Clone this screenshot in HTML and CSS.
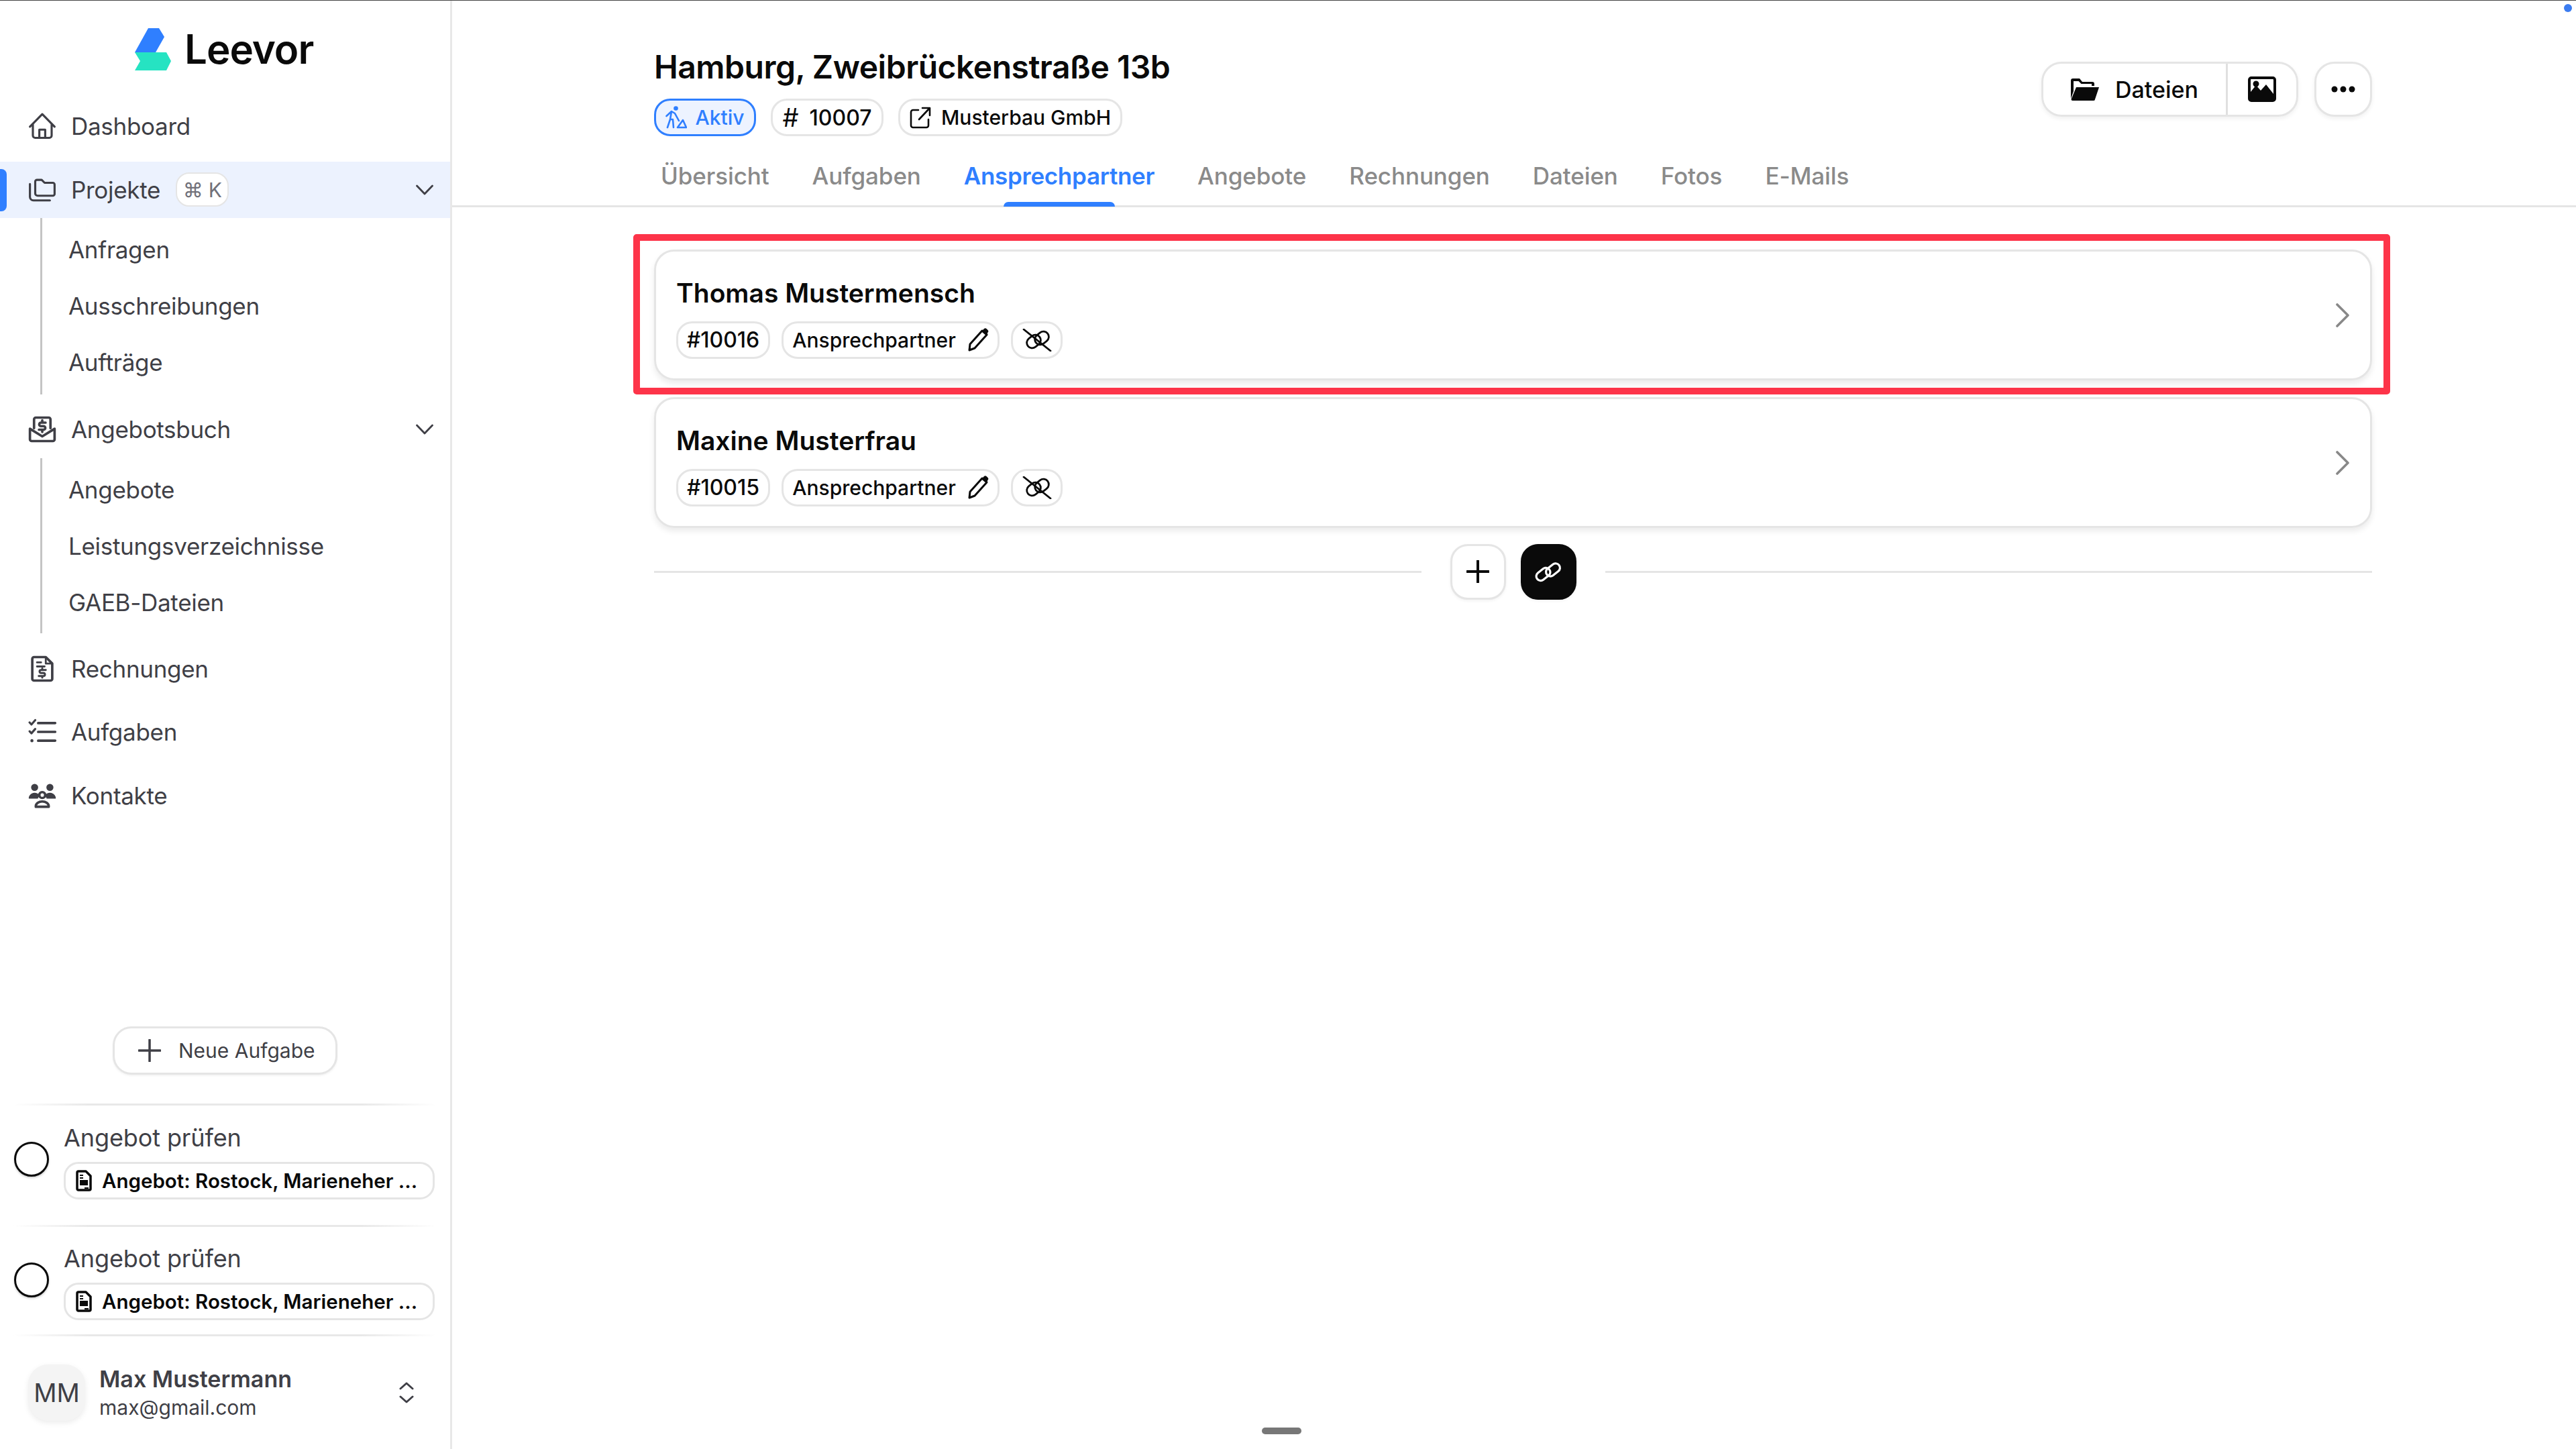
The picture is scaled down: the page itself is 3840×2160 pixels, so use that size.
FILE: index.html
```html
<!DOCTYPE html>
<html lang="de">
<head>
<meta charset="utf-8">
<title>Leevor – Ansprechpartner</title>
<link rel="stylesheet" href="styles.css">
</head>
<body>
<div class="app">
  <aside class="sidebar">
    <div class="logo">
      <svg class="logo-mark" viewBox="0 0 54 63"><polygon fill="#2f7fff" points="20,0 36,0 44,13 31,36 0,36"/><polygon fill="#26e3c2" points="0,36 47,36 54,49 47,63 0,63 8,49"/></svg>
      <span class="logo-text">Leevor</span>
    </div>
    <nav class="nav">
      <a class="nav-item"><svg class="ico" viewBox="0 0 24 24"><path d="M1.500 12.500 12 1.800l10.500 10.700M4 10v10a2 2 0 0 0 2 2h12a2 2 0 0 0 2-2V10M9.500 22v-7h5v7"/></svg><span>Dashboard</span></a>
      <div class="group">
        <a class="nav-item active"><svg class="ico" viewBox="0 0 24 24"><path d="M6 15V5a1.500 1.500 0 0 1 1.500-1.500h4L14 6h7a1.500 1.500 0 0 1 1.500 1.500v8A1.500 1.500 0 0 1 21 17H8a2 2 0 0 1-2-2z"/><path d="M1.500 7v11a3 3 0 0 0 3 3h14"/></svg><span>Projekte</span><kbd class="kbd">⌘ K</kbd><svg class="chev" viewBox="0 0 26 16"><path d="m1.500 2 11.500 12L24.500 2"/></svg></a>
        <div class="sub sub-a"><a>Anfragen</a><a>Ausschreibungen</a><a>Aufträge</a></div>
      </div>
      <div class="group">
        <a class="nav-item"><svg class="ico ico-bold" viewBox="0 0 24 24"><path d="M5 11V3.500A1.500 1.500 0 0 1 6.500 2h11A1.500 1.500 0 0 1 19 3.500V11"/><path d="M1.500 11.500v9A1.500 1.500 0 0 0 3 22h18a1.500 1.500 0 0 0 1.500-1.500v-9L12 18z"/><path d="M14.800 6.300h-3.900a1.500 1.500 0 0 0 0 3h2.200a1.500 1.500 0 0 1 0 3H9.200M12 4.400v1.900M12 12.300v1.900"/></svg><span>Angebotsbuch</span><svg class="chev" viewBox="0 0 26 16"><path d="m1.500 2 11.500 12L24.500 2"/></svg></a>
        <div class="sub sub-b"><a>Angebote</a><a>Leistungsverzeichnisse</a><a>GAEB-Dateien</a></div>
      </div>
      <a class="nav-item"><svg class="ico ico-bold" viewBox="0 0 24 24"><path d="M3.500 3.500A1.500 1.500 0 0 1 5 2h10l5.500 5.500v13A1.500 1.500 0 0 1 19 22H5a1.500 1.500 0 0 1-1.500-1.500z"/><path d="M15 2.500V7.500h5M7.500 6.500H11M7.500 10H14" stroke-width="1.600"/><path d="M15 13h-4a1.300 1.300 0 0 0 0 2.600h2a1.300 1.300 0 0 1 0 2.600H9M12 11.700v1.300M12 18.200v1.300" stroke-width="1.700"/></svg><span>Rechnungen</span></a>
      <a class="nav-item"><svg class="ico ico-bold" viewBox="0 0 24 24"><path d="M8.500 4.500H23M8.500 12H23M8.500 19.500H23"/><path d="m1.200 4 1.600 1.700L6 2M1.200 11.500l1.600 1.700L6 9.500" stroke-width="1.800"/><circle class="solid" cx="3.200" cy="19.500" r="1.300"/></svg><span>Aufgaben</span></a>
      <a class="nav-item"><svg class="ico ico-bold" viewBox="0 0 24 24"><g class="solid"><circle cx="5.500" cy="5" r="3"/><circle cx="18.500" cy="5" r="3"/><path d="M.5 14.500a5 4.500 0 0 1 9.500-2.300 5 5 0 0 0-1.800 2.300zM23.500 14.500a5 4.500 0 0 0-9.500-2.300 5 5 0 0 1 1.800 2.300z"/></g><circle cx="12" cy="11.500" r="2.500"/><path d="M6.500 21.500v-.5a5.500 4 0 0 1 11 0v.5z"/></svg><span>Kontakte</span></a>
    </nav>
    <div class="side-bottom">
      <button class="new-task"><svg class="plus-ico" viewBox="0 0 34 34"><path d="M17 1v32M1 17h32"/></svg><span>Neue Aufgabe</span></button>
      <div class="rule"></div>
      <div class="task">
        <span class="radio"></span>
        <div class="task-body">
          <div class="task-title">Angebot prüfen</div>
          <div class="task-chip"><svg class="doc-ico" viewBox="0 0 24 32"><path class="doc-o" d="M2 4a2 2 0 0 1 2-2h11l7 7v19a2 2 0 0 1-2 2H4a2 2 0 0 1-2-2z"/><path class="doc-f" d="M6 15h12v8H6zM6 7h5v2H6zM6 11h5v2H6zM13 26h6v2h-6z"/></svg><span>Angebot: Rostock, Marieneher ...</span></div>
        </div>
      </div>
      <div class="rule"></div>
      <div class="task task-last">
        <span class="radio"></span>
        <div class="task-body">
          <div class="task-title">Angebot prüfen</div>
          <div class="task-chip"><svg class="doc-ico" viewBox="0 0 24 32"><path class="doc-o" d="M2 4a2 2 0 0 1 2-2h11l7 7v19a2 2 0 0 1-2 2H4a2 2 0 0 1-2-2z"/><path class="doc-f" d="M6 15h12v8H6zM6 7h5v2H6zM6 11h5v2H6zM13 26h6v2h-6z"/></svg><span>Angebot: Rostock, Marieneher ...</span></div>
        </div>
      </div>
      <div class="rule"></div>
      <div class="user">
        <div class="avatar">MM</div>
        <div class="user-text"><div class="user-name">Max Mustermann</div><div class="user-mail">max@gmail.com</div></div>
        <svg class="updown" viewBox="0 0 22 32"><path d="m2 10 9-8 9 8M2 22l9 8 9-8"/></svg>
      </div>
    </div>
  </aside>
  <main class="main">
    <header class="header">
      <div class="head-top">
        <div>
          <h1 class="title">Hamburg, Zweibrückenstraße 13b</h1>
          <div class="chips">
            <span class="chip chip-active"><svg class="chip-ico" viewBox="0 0 32 34"><circle class="blue-f" cx="15.500" cy="3.500" r="3.300"/><path d="M1.500 15 9 8l5 3 6 11M9 8 7 20 3 32M7 20h4l1 12M18 32h13l-5-11z"/></svg>Aktiv</span>
            <span class="chip chip-hash"><span class="hash">#</span>10007</span>
            <span class="chip chip-co"><svg class="chip-ico" viewBox="0 0 32 34"><path d="M13 6H5a3 3 0 0 0-3 3v20a3 3 0 0 0 3 3h20a3 3 0 0 0 3-3v-9M14 20 29 4M19 3h11v11"/></svg>Musterbau GmbH</span>
          </div>
        </div>
        <div class="actions">
          <div class="btn-group">
            <button class="btn btn-files"><svg class="folder-ico" viewBox="0 0 42 34"><path d="M0 4a3 3 0 0 1 3-3h10l4 5h15a3 3 0 0 1 3 3v3H31V9H15.500l-4-4H4v15l-4 11z"/><path d="M8 14h34l-6 18a2 2 0 0 1-2 2H2.500a2 2 0 0 1-2-2z"/></svg><span>Dateien</span></button>
            <button class="btn btn-image"><svg class="image-ico" viewBox="0 0 42 38"><path fill-rule="evenodd" d="M5 0h32a5 5 0 0 1 5 5v28a5 5 0 0 1-5 5H5a5 5 0 0 1-5-5V5a5 5 0 0 1 5-5zm0 4a1 1 0 0 0-1 1v18l8-10 7 8 8-9 11 14V5a1 1 0 0 0-1-1z"/><circle cx="12" cy="11" r="4.500"/></svg></button>
          </div>
          <button class="btn-more"><svg class="dots" viewBox="0 0 36 10"><circle cx="5" cy="5" r="4.500"/><circle cx="18" cy="5" r="4.500"/><circle cx="31" cy="5" r="4.500"/></svg></button>
        </div>
      </div>
      <nav class="tabs">
        <a class="tab">Übersicht</a><a class="tab">Aufgaben</a><a class="tab tab-on">Ansprechpartner</a><a class="tab">Angebote</a><a class="tab">Rechnungen</a><a class="tab">Dateien</a><a class="tab">Fotos</a><a class="tab">E-Mails</a>
      </nav>
    </header>
    <section class="content">
      <article class="card">
        <div class="highlight"></div>
        <div class="card-body">
          <div class="card-name">Thomas Mustermensch</div>
          <div class="card-chips">
            <span class="pill pill-id">#10016</span>
            <span class="pill pill-role">Ansprechpartner<svg class="pencil" viewBox="0 0 32 36"><path d="M3 33l1-9L22 4l7 6-18 20z"/><path class="solid-k" d="m22 4 3-3a2.500 2.500 0 0 1 3.500 0l2 2a2.500 2.500 0 0 1 0 3.500L29 10z"/></svg></span>
            <span class="pill pill-icon"><svg class="unlink" viewBox="0 0 44 34"><rect x="6" y="11" width="22" height="16" rx="8" transform="rotate(-38 17 19)"/><rect x="18" y="6" width="22" height="16" rx="8" transform="rotate(-38 29 14)"/><path d="M2 1l40 32"/></svg></span>
          </div>
        </div>
        <svg class="card-chev" viewBox="0 0 20 36"><path d="m2 2 16 16L2 34"/></svg>
      </article>
      <article class="card">
        <div class="card-body">
          <div class="card-name">Maxine Musterfrau</div>
          <div class="card-chips">
            <span class="pill pill-id">#10015</span>
            <span class="pill pill-role">Ansprechpartner<svg class="pencil" viewBox="0 0 32 36"><path d="M3 33l1-9L22 4l7 6-18 20z"/><path class="solid-k" d="m22 4 3-3a2.500 2.500 0 0 1 3.500 0l2 2a2.500 2.500 0 0 1 0 3.500L29 10z"/></svg></span>
            <span class="pill pill-icon"><svg class="unlink" viewBox="0 0 44 34"><rect x="6" y="11" width="22" height="16" rx="8" transform="rotate(-38 17 19)"/><rect x="18" y="6" width="22" height="16" rx="8" transform="rotate(-38 29 14)"/><path d="M2 1l40 32"/></svg></span>
          </div>
        </div>
        <svg class="card-chev" viewBox="0 0 20 36"><path d="m2 2 16 16L2 34"/></svg>
      </article>
      <div class="add-row">
        <div class="add-line"></div>
        <button class="add-btn"><svg class="add-ico" viewBox="0 0 34 34"><path d="M17 1v32M1 17h32"/></svg></button>
        <button class="add-btn add-btn-dark"><svg class="link-ico" viewBox="0 0 40 31"><rect x="1" y="12.500" width="23" height="13" rx="6.500" transform="rotate(-38 12.500 19)"/><rect x="15.500" y="6" width="23" height="13" rx="6.500" transform="rotate(-38 27 12.500)"/></svg></button>
        <div class="add-line"></div>
      </div>
    </section>
  </main>
</div>
<span class="corner-dot"></span>
<span class="drag-handle"></span>
</body>
</html>
```

FILE: styles.css
```css
* { box-sizing: border-box; }
html, body { margin: 0; padding: 0; }
body {
  width: 3840px;
  height: 2160px;
  overflow: hidden;
  background: #fff;
  color: #0a0a0a;
  font-family: Inter, "Liberation Sans", sans-serif;
  border-top: 1px solid #444;
  position: relative;
}
svg { display: block; flex: none; fill: none; stroke: currentColor; stroke-linecap: round; stroke-linejoin: round; }
button { font: inherit; color: inherit; background: #fff; cursor: pointer; }
.app { display: flex; height: 2159px; }

/* Sidebar */
.sidebar {
  width: 674px;
  flex: none;
  display: flex;
  flex-direction: column;
  border-right: 3px solid #e8e8e8;
  color: #3f3f46;
}
.logo { height: 145px; padding: 41px 0 0 201px; display: flex; align-items: flex-start; gap: 20px; }
.logo-mark { width: 54px; height: 63px; stroke: none; }
.logo-text { font-size: 60px; line-height: 63px; font-weight: 600; color: #0a0a0a; letter-spacing: -1px; }
.nav { display: flex; flex-direction: column; gap: 10.5px; }
.nav-item {
  height: 84px;
  display: flex;
  align-items: center;
  padding-left: 42px;
  font-size: 35px;
  letter-spacing: -.3px;
  position: relative;
}
.nav-item > span { margin-left: 22px; }
.ico { width: 42px; height: 42px; stroke-width: 1.800; }
.ico-bold { stroke-width: 2.100; }
.ico .solid { fill: currentColor; stroke: none; }
.active { background: #ecf2fe; }
.active::before {
  content: "";
  position: absolute;
  left: 0;
  top: 11px;
  width: 10px;
  height: 63px;
  background: #2f7fff;
  border-radius: 0 8px 8px 0;
}
.kbd {
  margin-left: 23px;
  width: 79px;
  height: 51px;
  display: flex;
  align-items: center;
  justify-content: center;
  background: #fff;
  border: 2px solid #e5e5e5;
  border-radius: 20px;
  font: 30px Inter, "DejaVu Sans", sans-serif;
  color: #71717a;
}
.chev { width: 26px; height: 16px; margin-left: auto; margin-right: 25px; stroke-width: 2.800; }
.sub {
  margin-left: 60px;
  border-left: 3px solid #c4c4c4;
  display: flex;
  flex-direction: column;
  padding: 5px 0 6px 39px;
  font-size: 35px;
  letter-spacing: -.3px;
}
.sub-b { margin-top: 1px; padding-bottom: 4px; height: 261px; }
.sub a { height: 84px; display: flex; align-items: center; }
.side-bottom { margin-top: auto; display: flex; flex-direction: column; }
.new-task {
  align-self: center;
  width: 335px;
  height: 72px;
  display: flex;
  align-items: center;
  gap: 26px;
  padding: 0 0 0 35px;
  border: 3px solid #e5e5e5;
  border-radius: 28px;
  font-size: 30px;
  color: #3f3f46;
  margin-bottom: 43px;
  box-shadow: 0 2px 3px rgba(0,0,0,.05);
}
.plus-ico { width: 34px; height: 34px; stroke-width: 3.500; }
.rule {
  height: 3px;
  margin: 0 20px;
  background: linear-gradient(90deg, transparent, #e8e8e8 18%, #e8e8e8 82%, transparent);
}
.task { display: flex; align-items: center; gap: 22px; padding: 26px 23px 38px 21px; }
.task-last { padding-top: 25px; padding-bottom: 21px; }
.radio {
  width: 52px;
  height: 52px;
  flex: none;
  border: 3px solid #0a0a0a;
  border-radius: 50%;
  margin-top: -6px;
  box-shadow: 0 2px 3px rgba(0,0,0,.18);
}
.task-body { flex: 1; min-width: 0; }
.task-title { font-size: 36px; line-height: 44px; margin-bottom: 14px; color: #3f3f46; letter-spacing: -.1px; }
.task-chip {
  height: 56px;
  display: flex;
  align-items: center;
  gap: 15px;
  padding-left: 15px;
  border: 3px solid #e5e5e5;
  border-radius: 22px;
  font-size: 29.500px;
  font-weight: 600;
  color: #0a0a0a;
  white-space: nowrap;
}
.doc-ico { width: 24px; height: 32px; }
.doc-o { fill: none; stroke-width: 3.500; }
.doc-f { fill: currentColor; stroke: none; }
.user { display: flex; align-items: center; padding: 42px 54px 42px 42px; }
.avatar {
  width: 85px;
  height: 84px;
  border-radius: 30px;
  background: #f4f4f4;
  box-shadow: 0 3px 8px rgba(0,0,0,.08);
  display: flex;
  align-items: center;
  justify-content: center;
  font-size: 38px;
  color: #3f3f46;
}
.user-text { margin-left: 21px; }
.user-name { font-size: 34px; line-height: 44px; font-weight: 600; color: #3f3f46; }
.user-mail { font-size: 30px; line-height: 40px; color: #3f3f46; }
.updown { width: 22px; height: 32px; margin-left: auto; stroke-width: 3; }

/* Main */
.main { flex: 1; min-width: 0; display: flex; flex-direction: column; }
.header { height: 308px; border-bottom: 3px solid #e5e5e5; display: flex; flex-direction: column; }
.head-top { display: flex; justify-content: space-between; padding: 71px 304px 0 301px; }
.title { margin: 0; font-size: 48px; line-height: 56px; font-weight: 600; color: #0a0a0a; letter-spacing: -.5px; }
.chips { display: flex; gap: 22px; margin-top: 19px; }
.chip {
  height: 56px;
  display: flex;
  align-items: center;
  justify-content: center;
  gap: 12px;
  border: 3px solid #e5e5e5;
  border-radius: 24px;
  font-size: 30px;
  font-weight: 500;
  white-space: nowrap;
}
.chip-active { border-color: #2f7fff; background: #edf3ff; color: #2f7fff; width: 152px; }
.chip-hash { width: 168px; font-size: 32px; gap: 16px; }
.chip-co { width: 334px; gap: 15px; }
.hash { font-size: 38px; font-weight: 400; }
.chip-ico { width: 32px; height: 34px; stroke-width: 2.600; }
.blue-f { fill: currentColor; stroke: none; }
.actions { display: flex; gap: 24px; margin-top: 20px; align-items: flex-start; }
.btn-group {
  display: flex;
  height: 82px;
  border: 3px solid #e5e5e5;
  border-radius: 30px;
  box-shadow: 0 3px 6px rgba(0,0,0,.06);
}
.btn { border: 0; background: transparent; height: 100%; display: flex; align-items: center; justify-content: center; padding: 0; }
.btn-files { width: 275px; gap: 24px; border-right: 3px solid #e0e0e0; font-size: 34px; font-weight: 500; }
.btn-image { width: 102px; }
.folder-ico { width: 42px; height: 34px; fill: #0a0a0a; stroke: none; }
.image-ico { width: 42px; height: 38px; fill: #0a0a0a; stroke: none; }
.btn-more {
  width: 86px;
  height: 82px;
  display: flex;
  align-items: center;
  justify-content: center;
  padding: 0;
  border: 3px solid #e5e5e5;
  border-radius: 30px;
  box-shadow: 0 3px 6px rgba(0,0,0,.06);
}
.dots { width: 36px; height: 10px; fill: #0a0a0a; stroke: none; }
.tabs { display: flex; gap: 64px; padding-left: 311px; margin-top: auto; }
.tab {
  height: 88px;
  display: flex;
  align-items: center;
  position: relative;
  font-size: 35px;
  letter-spacing: -.1px;
  font-weight: 500;
  color: #8a8a8a;
}
.tab-on { color: #2f7fff; font-weight: 600; letter-spacing: -.3px; }
.tab-on::after {
  content: "";
  position: absolute;
  left: 59px;
  right: 59px;
  bottom: -2px;
  height: 7px;
  background: #2f7fff;
  border-radius: 7px 7px 0 0;
}

/* Content */
.content { padding: 63px 304px 0 301px; display: flex; flex-direction: column; gap: 25px; }
.card {
  position: relative;
  height: 195px;
  display: flex;
  align-items: center;
  justify-content: space-between;
  padding: 7px 31px 0 30px;
  border: 3px solid #e5e5e5;
  border-radius: 30px;
  box-shadow: 0 5px 9px rgba(0,0,0,.08);
}
.highlight {
  position: absolute;
  top: -26px;
  left: -34px;
  right: -30px;
  bottom: -24px;
  border: 10px solid #fd3449;
  border-radius: 5px;
  pointer-events: none;
}
.card-name { font-size: 39px; line-height: 50px; font-weight: 600; }
.card-chips { display: flex; gap: 17px; margin-top: 17px; }
.pill {
  height: 56px;
  display: flex;
  align-items: center;
  justify-content: center;
  border: 3px solid #e5e5e5;
  border-radius: 24px;
  font-size: 30px;
  font-weight: 500;
}
.pill-id { width: 140px; font-size: 32px; }
.pill-role { width: 325px; gap: 17px; }
.pill-icon { width: 77px; }
.pencil { width: 32px; height: 36px; stroke-width: 3; }
.solid-k { fill: currentColor; stroke: none; }
.unlink { width: 44px; height: 34px; stroke-width: 2.800; }
.card-chev { width: 20px; height: 36px; color: #888; stroke-width: 3.600; margin-top: -7px; }
.add-row { display: flex; align-items: center; gap: 43px; margin-top: -2px; height: 84px; }
.add-line { flex: 1; height: 3px; background: #e5e5e5; }
.add-btn {
  width: 83px;
  height: 83px;
  display: flex;
  align-items: center;
  justify-content: center;
  padding: 0;
  border: 3px solid #e5e5e5;
  border-radius: 26px;
  box-shadow: 0 2px 4px rgba(0,0,0,.05);
}
.add-btn + .add-btn { margin-left: -21px; }
.add-btn-dark { background: #0a0a0a; border-color: #0a0a0a; color: #fff; }
.add-ico { width: 34px; height: 34px; stroke-width: 4; }
.link-ico { width: 40px; height: 31px; stroke-width: 3.200; }

/* Overlays */
.corner-dot {
  position: absolute;
  top: 5px;
  left: 3822px;
  width: 12px;
  height: 12px;
  border-radius: 50%;
  background: #3b7cf0;
}
.drag-handle {
  position: absolute;
  top: 2127px;
  left: 1881px;
  width: 59px;
  height: 10px;
  border-radius: 5px;
  background: #777;
}
```
